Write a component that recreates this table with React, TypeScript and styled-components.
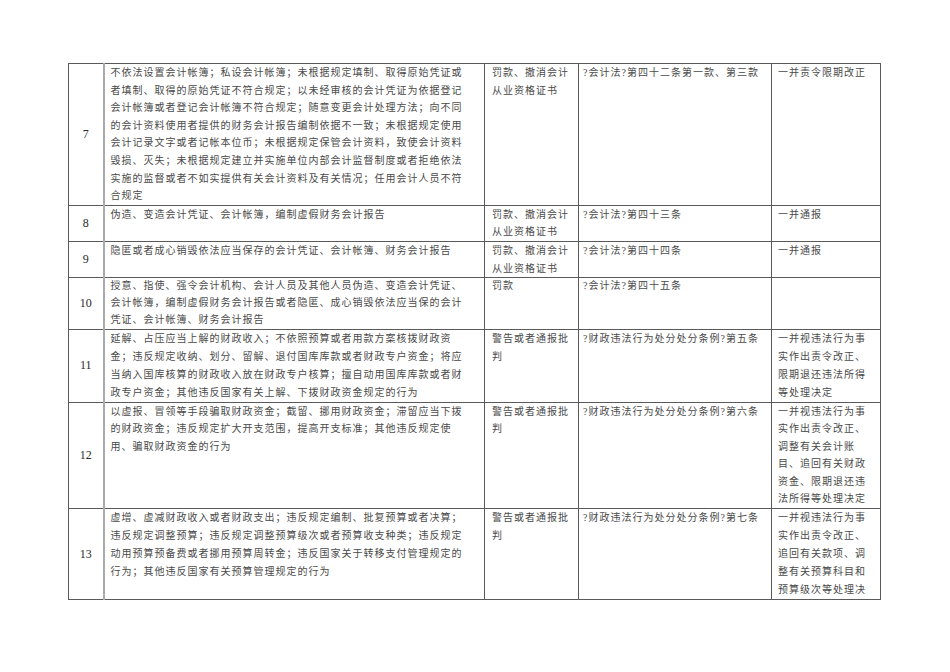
import React from "react";
import styled, { createGlobalStyle } from "styled-components";

const GlobalStyle = createGlobalStyle`
  html, body { margin: 0; padding: 0; background: #ffffff; }
  body { font-family: "Liberation Serif", "Noto Sans CJK SC", serif; }
`;

const Page = styled.div`
  width: 950px;
  height: 672px;
  box-sizing: border-box;
  padding: 63px 0 0 68px;
  background: #ffffff;
  overflow: hidden;
`;

const Table = styled.table`
  border-collapse: collapse;
  table-layout: fixed;
  width: 812px;
  border: 1px solid #5a5a5a;
`;

const Col = styled.col<{ $w: number }>`
  width: ${(p) => p.$w}px;
`;

const Row = styled.tr<{ $h: number }>`
  height: ${(p) => p.$h}px;
`;

const NumCell = styled.td`
  border: 1px solid #5a5a5a;
  border-right: 2px solid #ababab;
  text-align: center;
  vertical-align: middle;
  font-family: "Liberation Serif", serif;
  font-size: 12px;
  color: #2a2a2a;
  padding: 0;
`;

const TextCell = styled.td<{ $pl: number; $lh: number }>`
  border: 1px solid #5a5a5a;
  vertical-align: top;
  padding: 0 0 0 ${(p) => p.$pl}px;
  font-family: "Liberation Serif", "Noto Sans CJK SC", serif;
  font-size: 10px;
  letter-spacing: 1px;
  line-height: ${(p) => p.$lh}px;
  color: #4a4a4a;
  overflow: hidden;
`;

const Line = styled.span`
  display: block;
  white-space: nowrap;
`;

type RowData = {
  n: string;
  h: number;
  lh: number;
  desc: string[];
  pen: string[];
  law: string[];
  extra: string[];
};

const fk = ["罚款、撤消会计", "从业资格证书"];
const jg = ["警告或者通报批", "判"];

const rows: RowData[] = [
  {
    n: "7",
    h: 140,
    lh: 17.6,
    desc: [
      "不依法设置会计帐簿；私设会计帐簿；未根据规定填制、取得原始凭证或",
      "者填制、取得的原始凭证不符合规定；以未经审核的会计凭证为依据登记",
      "会计帐簿或者登记会计帐簿不符合规定；随意变更会计处理方法；向不同",
      "的会计资料使用者提供的财务会计报告编制依据不一致；未根据规定使用",
      "会计记录文字或者记帐本位币；未根据规定保管会计资料，致使会计资料",
      "毁损、灭失；未根据规定建立并实施单位内部会计监督制度或者拒绝依法",
      "实施的监督或者不如实提供有关会计资料及有关情况；任用会计人员不符",
      "合规定",
    ],
    pen: fk,
    law: ["?会计法?第四十二条第一款、第三款"],
    extra: ["一并责令限期改正"],
  },
  {
    n: "8",
    h: 36,
    lh: 17.6,
    desc: ["伪造、变造会计凭证、会计帐簿，编制虚假财务会计报告"],
    pen: fk,
    law: ["?会计法?第四十三条"],
    extra: ["一并通报"],
  },
  {
    n: "9",
    h: 36,
    lh: 17.6,
    desc: ["隐匿或者成心销毁依法应当保存的会计凭证、会计帐簿、财务会计报告"],
    pen: fk,
    law: ["?会计法?第四十四条"],
    extra: ["一并通报"],
  },
  {
    n: "10",
    h: 51,
    lh: 16.8,
    desc: [
      "授意、指使、强令会计机构、会计人员及其他人员伪造、变造会计凭证、",
      "会计帐簿，编制虚假财务会计报告或者隐匿、成心销毁依法应当保的会计",
      "凭证、会计帐簿、财务会计报告",
    ],
    pen: ["罚款"],
    law: ["?会计法?第四十五条"],
    extra: [],
  },
  {
    n: "11",
    h: 73,
    lh: 18,
    desc: [
      "延解、占压应当上解的财政收入；不依照预算或者用款方案核拨财政资",
      "金；违反规定收纳、划分、留解、退付国库库款或者财政专户资金；将应",
      "当纳入国库核算的财政收入放在财政专户核算；擅自动用国库库款或者财",
      "政专户资金；其他违反国家有关上解、下拨财政资金规定的行为",
    ],
    pen: jg,
    law: ["?财政违法行为处分处分条例?第五条"],
    extra: ["一并视违法行为事", "实作出责令改正、", "限期退还违法所得", "等处理决定"],
  },
  {
    n: "12",
    h: 106,
    lh: 17.6,
    desc: [
      "以虚报、冒领等手段骗取财政资金；截留、挪用财政资金；滞留应当下拨",
      "的财政资金；违反规定扩大开支范围，提高开支标准；其他违反规定使",
      "用、骗取财政资金的行为",
    ],
    pen: jg,
    law: ["?财政违法行为处分处分条例?第六条"],
    extra: [
      "一并视违法行为事",
      "实作出责令改正、",
      "调整有关会计账",
      "目、追回有关财政",
      "资金、限期退还违",
      "法所得等处理决定",
    ],
  },
  {
    n: "13",
    h: 91,
    lh: 18,
    desc: [
      "虚增、虚减财政收入或者财政支出；违反规定编制、批复预算或者决算；",
      "违反规定调整预算；违反规定调整预算级次或者预算收支种类；违反规定",
      "动用预算预备费或者挪用预算周转金；违反国家关于转移支付管理规定的",
      "行为；其他违反国家有关预算管理规定的行为",
    ],
    pen: jg,
    law: ["?财政违法行为处分处分条例?第七条"],
    extra: [
      "一并视违法行为事",
      "实作出责令改正、",
      "追回有关款项、调",
      "整有关预算科目和",
      "预算级次等处理决",
    ],
  },
];

const Lines: React.FC<{ items: string[] }> = ({ items }) => (
  <>
    {items.map((t, i) => (
      <Line key={i}>{t}</Line>
    ))}
  </>
);

const widths = [35, 381, 94, 193, 109];

export default function App() {
  return (
    <>
      <GlobalStyle />
      <Page>
        <Table>
          <colgroup>
            {widths.map((w, i) => (
              <Col key={i} $w={w} />
            ))}
          </colgroup>
          <tbody>
            {rows.map((r) => (
              <Row key={r.n} $h={r.h}>
                <NumCell>{r.n}</NumCell>
                <TextCell $pl={6} $lh={r.lh}>
                  <Lines items={r.desc} />
                </TextCell>
                <TextCell $pl={7} $lh={r.lh}>
                  <Lines items={r.pen} />
                </TextCell>
                <TextCell $pl={4} $lh={r.lh}>
                  <Lines items={r.law} />
                </TextCell>
                <TextCell $pl={6} $lh={r.lh}>
                  <Lines items={r.extra} />
                </TextCell>
              </Row>
            ))}
          </tbody>
        </Table>
      </Page>
    </>
  );
}
